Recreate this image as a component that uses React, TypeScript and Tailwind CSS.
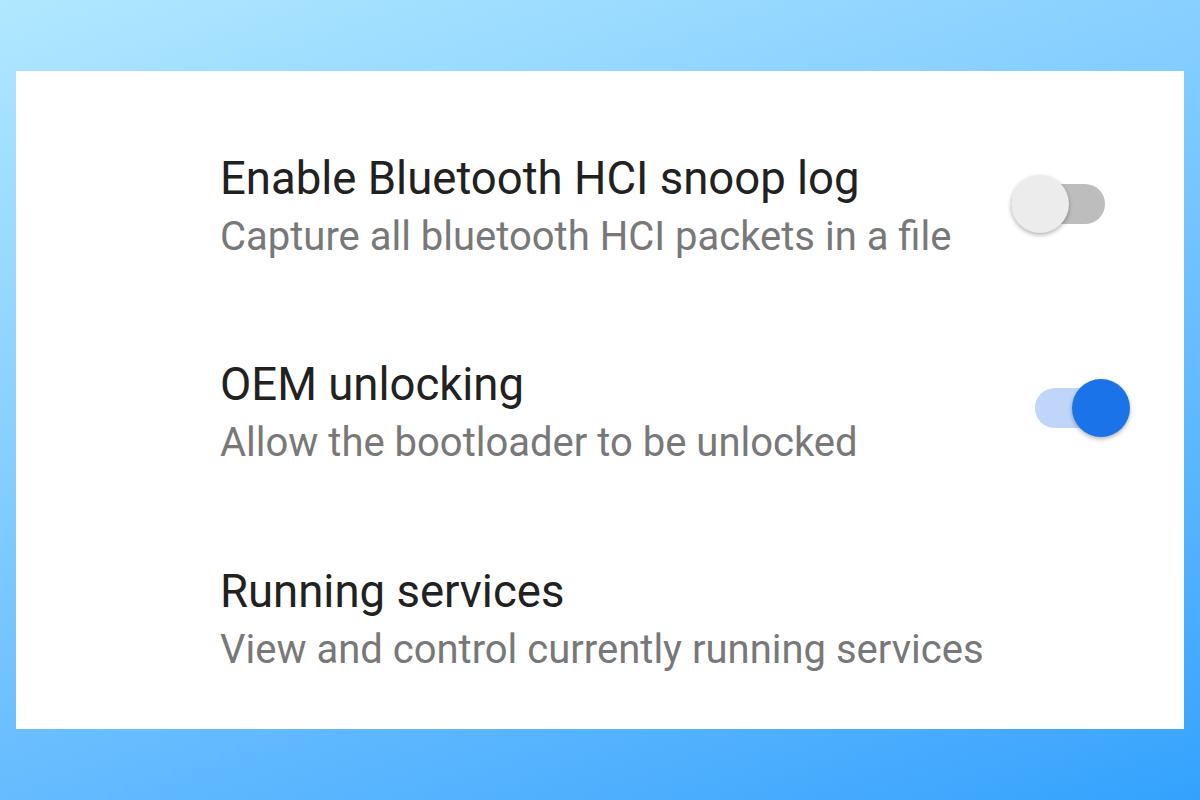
import React from "react";

type Row = {
  title: string;
  subtitle: string;
  toggle?: "on" | "off";
  rowClass: string;
  switchClass: string;
};

const ROWS: Row[] = [
  {
    title: "Enable Bluetooth HCI snoop log",
    subtitle: "Capture all bluetooth HCI packets in a file",
    toggle: "off",
    rowClass: "mt-0",
    switchClass: "mr-[78px] mt-[-7px]",
  },
  {
    title: "OEM unlocking",
    subtitle: "Allow the bootloader to be unlocked",
    toggle: "on",
    rowClass: "mt-[98px]",
    switchClass: "mr-[54px] mt-[-10px]",
  },
  {
    title: "Running services",
    subtitle: "View and control currently running services",
    rowClass: "mt-[99px]",
    switchClass: "",
  },
];

function Toggle({ on }: { on: boolean }) {
  return (
    <div className="relative w-[95px] h-[58px]">
      <div className={`absolute left-0 top-[9px] w-[94px] h-[40px] rounded-full ${on ? "bg-[#bfd6fa]" : "bg-[#bdbdbd]"}`} />
      <div
        className={`absolute top-0 w-[58px] h-[58px] rounded-full shadow-[0_2px_4px_rgba(0,0,0,0.3)] ${on ? "left-[37px] bg-[#1a73e8]" : "left-0 bg-[#ececec]"}`}
      />
    </div>
  );
}

export default function App() {
  return (
    <div className="w-[1200px] h-[800px] bg-linear-160 from-[#b0e8ff] to-[#33a2fd] pt-[71px] px-4 font-['Roboto',sans-serif]">
      <div className="h-[658px] bg-white pt-[82px] pl-[204px]">
        {ROWS.map((r) => (
          <div key={r.title} className={`flex items-center ${r.rowClass}`}>
            <div className="flex-1">
              <div className="text-[45.5px] leading-[52px] text-[#212121]">{r.title}</div>
              <div className="mt-[8px] text-[40px] leading-[48px] text-[#787878]">{r.subtitle}</div>
            </div>
            {r.toggle && (
              <div className={r.switchClass}>
                <Toggle on={r.toggle === "on"} />
              </div>
            )}
          </div>
        ))}
      </div>
    </div>
  );
}
